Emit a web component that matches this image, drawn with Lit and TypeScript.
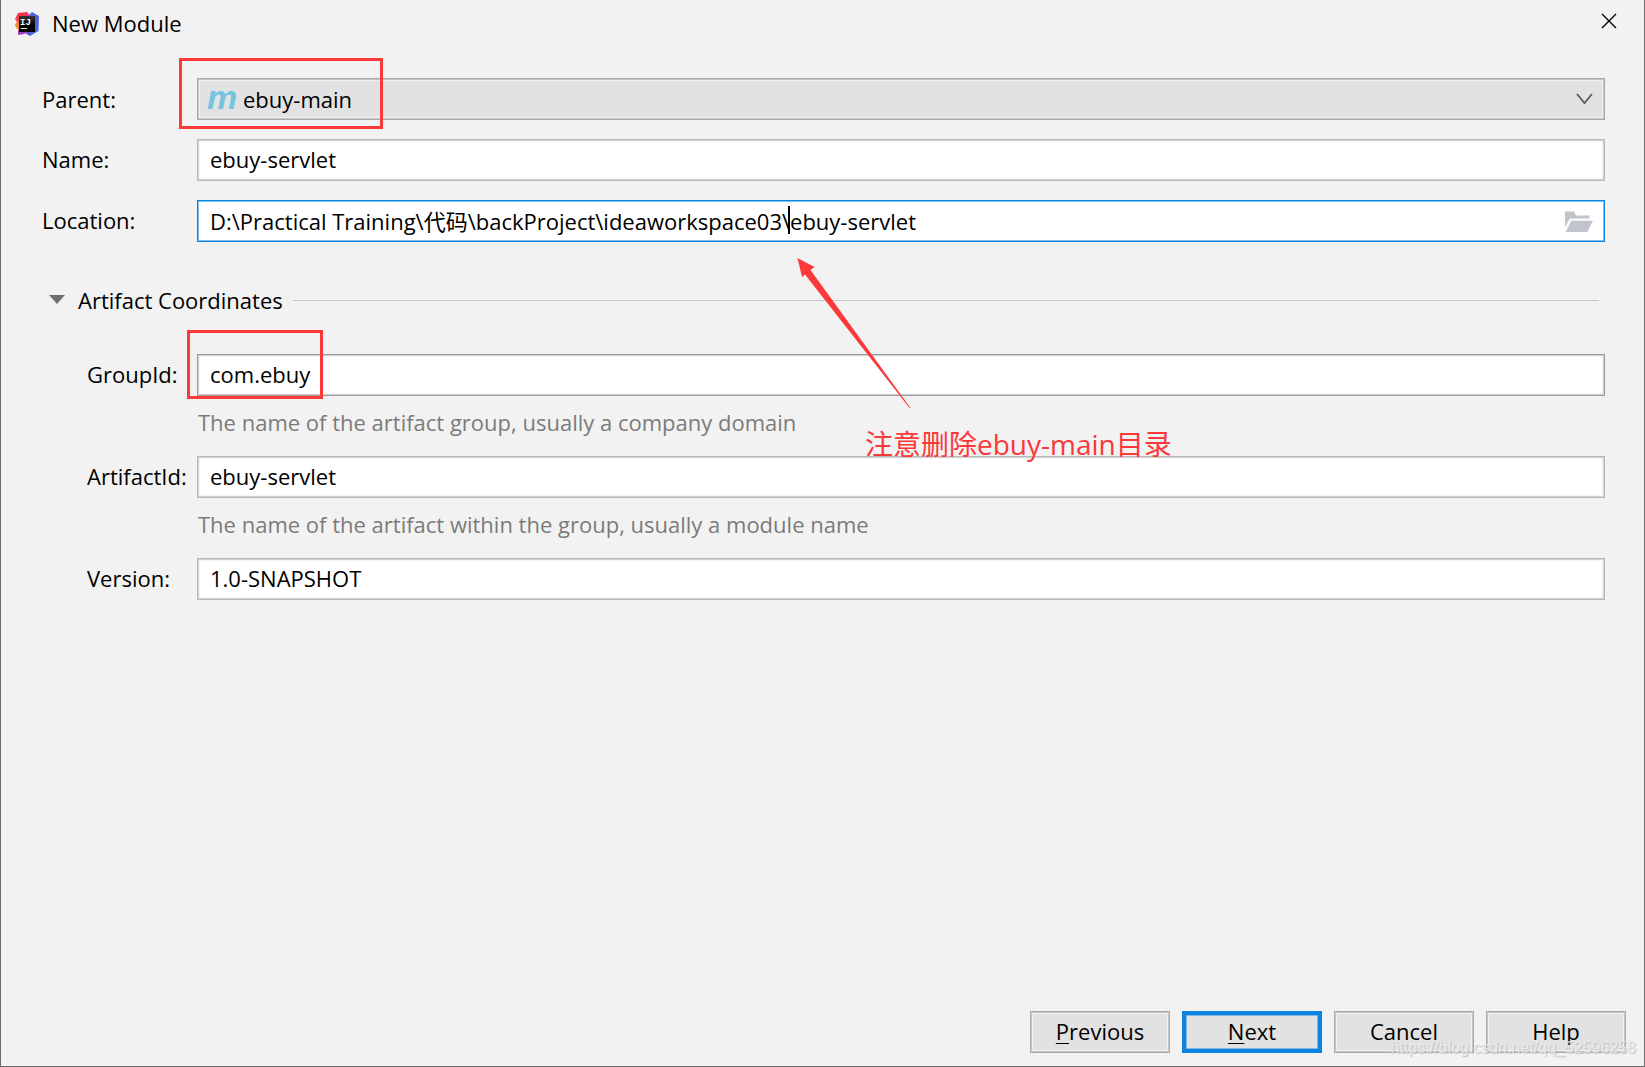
import { LitElement, html, css, svg } from "lit";
import { customElement, property, state } from "lit/decorators.js";

const folderIcon = svg`
  <svg viewBox="0 0 28 22" width="28" height="22" aria-hidden="true">
    <path d="M0 0.5H9L11 4.5H24.5V7.5H5L0 16.5Z" fill="#bfc5ca"></path>
    <path d="M6.3 9.8H28L22.3 21H0.5Z" fill="#bfc5ca"></path>
  </svg>`;

@customElement("form-row")
export class FormRow extends LitElement {
  @property() label = "";
  @property() value = "";
  @property() hint = "";
  @property({ type: Boolean, reflect: true }) active = false;
  @property({ type: Boolean, reflect: true }) strong = false;

  static styles = css`
    :host { display: grid; grid-template-columns: var(--label-width) minmax(0, 1fr); align-items: center; }
    .label { white-space: nowrap; line-height: 40px; padding-bottom: 2px; }
    .field { position: relative; height: 42px; }
    .input {
      display: block; box-sizing: border-box; width: 100%; height: 42px; margin: 0; padding: 0 12px 2px;
      border: 1px solid #b8b8b8; border-radius: 0; outline: none; color: #000; background: #fff;
      box-shadow: inset 0 0 0 1px #d2d2d2, inset 0 0 0 2px #f6f6f6; font: inherit;
    }
    :host([strong]) .input { border-color: #9a9a9a; }
    :host([active]) .input { border-color: #0a84e0; box-shadow: inset 0 0 0 1px #7fbef0; padding-right: 52px; }
    .browse {
      position: absolute; right: 8px; top: 7px; display: grid; place-items: center;
      width: 36px; height: 30px; padding: 0; border: 0; background: none;
    }
    .caret { position: absolute; left: 591px; top: 6px; width: 2px; height: 28px; background: #000; }
    .hint { grid-column: 2; height: 60px; line-height: 52px; padding-left: 1px; color: #7b7b7b; white-space: nowrap; }
  `;

  render() {
    return html`
      <label class="label" for="box">${this.label}</label>
      <div class="field">
        <input class="input" id="box" type="text" spellcheck="false" .value=${this.value} />
        ${this.active
          ? html`<span class="caret"></span>
              <button class="browse" type="button" aria-label="Browse">${folderIcon}</button>`
          : null}
      </div>
      ${this.hint ? html`<div class="hint">${this.hint}</div>` : null}
    `;
  }
}

@customElement("app-root")
export class AppRoot extends LitElement {
  @state() private open = true;

  static styles = css`
    :host {
      position: relative; display: flex; flex-direction: column; box-sizing: border-box; min-height: 100vh;
      border: 1px solid #6c6c6c; border-top: 0; overflow: hidden; background: #f2f2f2; color: #000;
      font: 22px/30px "Open Sans", "Noto Sans CJK SC", sans-serif;
    }
    .titlebar { display: flex; align-items: center; height: 48px; padding: 0 23px 0 14px; }
    .title { flex: 1; margin: 0 0 2px 13px; font-size: 22px; font-weight: 400; }
    .close { display: grid; place-items: center; width: 24px; height: 24px; margin-bottom: 6px; padding: 0; border: 0; background: none; }
    .form { flex: 1; padding: 30px 39px 0 41px; }
    .rows { display: grid; gap: 19px; --label-width: 155px; }
    .parent { display: grid; grid-template-columns: 155px minmax(0, 1fr); align-items: center; }
    .combo { position: relative; height: 42px; }
    .select {
      display: block; appearance: none; box-sizing: border-box; width: 100%; height: 42px; margin: 0; padding: 0 45px;
      border: 1px solid #a9a9a9; border-radius: 0; outline: none; background: #e2e2e2; color: #000; font: inherit;
      box-shadow: inset 0 0 0 1px #c6c6c6, inset 0 0 0 2px #f2f2f2;
    }
    .maven {
      position: absolute; left: 10px; top: 0; line-height: 38px; pointer-events: none;
      font-family: "Liberation Sans", sans-serif; font-size: 34px; font-weight: 700; font-style: italic; color: #74c4e0;
    }
    .chevron { position: absolute; right: 12px; top: 15px; pointer-events: none; }
    .section { display: flex; align-items: center; height: 30px; margin: 43px 6px 0 7px; }
    .toggle {
      display: flex; align-items: center; gap: 13px; margin: 0 10px 0 0; padding: 0; border: 0;
      background: none; color: inherit; font: inherit; white-space: nowrap;
    }
    .rule { flex: 1; height: 1px; background: #c8c8c8; }
    .details { margin: 39px 0 0 45px; --label-width: 110px; }
    .actions { display: flex; justify-content: flex-end; flex-wrap: wrap; gap: 12px; padding: 0 18px 13px; }
    .button {
      width: 140px; height: 42px; padding: 0 0 2px; border: 1px solid #a9a9a9; border-radius: 0; background: #e2e2e2;
      box-shadow: inset 0 0 0 1px #c6c6c6, inset 0 0 0 2px #f2f2f2; color: #000; font: inherit;
    }
    .primary { border: 4px solid #0a84e0; box-shadow: inset 0 0 0 1px #7fb8e6; }
    .key { text-decoration: underline; text-decoration-thickness: 1px; text-underline-offset: 3px; }
    .mark { position: absolute; box-sizing: border-box; border: 3px solid #fc3838; pointer-events: none; }
    .mark-parent { left: 178px; top: 58px; width: 204px; height: 71px; }
    .mark-group { left: 186px; top: 330px; width: 136px; height: 69px; }
    .arrow { position: absolute; left: 796px; top: 258px; pointer-events: none; }
    .note { position: absolute; left: 864px; top: 424px; margin: 0; color: #fc3838; font-size: 28px; line-height: 40px; white-space: nowrap; pointer-events: none; }
    .watermark {
      position: absolute; right: 8px; bottom: 8px; color: #ececec; text-shadow: 1px 1px 1px #b4b4b4; opacity: 0.8;
      font: 16px/20px "Liberation Sans", sans-serif; pointer-events: none;
    }
  `;

  private toggle() {
    this.open = !this.open;
  }

  render() {
    return html`
      <header class="titlebar">
        <svg viewBox="0 0 24 24" width="24" height="24" aria-hidden="true">
          <defs>
            <linearGradient id="left" x1="0" y1="0" x2="0" y2="1">
              <stop offset="0" stop-color="#fe2857"></stop><stop offset="0.5" stop-color="#fc5a3c"></stop>
              <stop offset="0.6" stop-color="#f98a2c"></stop><stop offset="1" stop-color="#9b3fd0"></stop>
            </linearGradient>
            <linearGradient id="right" x1="0" y1="0" x2="1" y2="1">
              <stop offset="0" stop-color="#3b6cf0"></stop><stop offset="0.6" stop-color="#5a5bd8"></stop><stop offset="1" stop-color="#2f7bea"></stop>
            </linearGradient>
            <linearGradient id="tile" x1="0" y1="0" x2="0" y2="1">
              <stop offset="0" stop-color="#353535"></stop><stop offset="0.6" stop-color="#000"></stop>
            </linearGradient>
          </defs>
          <path d="M14 3L17 0L24 4L23.5 19L15 24L8 20Z" fill="url(#right)"></path>
          <path d="M3 1L12 0L15 4L6 20L8 20L3 23L3 16L0 13L2 10L0 7Z" fill="url(#left)"></path>
          <path d="M3 23L4 18L14 19L9 22Z" fill="#a43bc4"></path>
          <path d="M0 13L3 10L5 16L2 17Z" fill="#f98a2c"></path>
          <rect x="4" y="4" width="16" height="16" fill="url(#tile)"></rect>
          <text x="5" y="13" fill="#fff" font-family="Liberation Mono, monospace" font-weight="700" font-size="9">IJ</text>
          <rect x="6" y="16" width="6" height="1" fill="#ddd"></rect>
        </svg>
        <h1 class="title">New Module</h1>
        <button class="close" type="button" aria-label="Close">
          <svg viewBox="0 0 16 16" width="16" height="16" aria-hidden="true">
            <path d="M1 1L15 15M15 1L1 15" stroke="#000" stroke-width="1.4" fill="none"></path>
          </svg>
        </button>
      </header>

      <main class="form">
        <div class="rows">
          <div class="parent">
            <label for="parent">Parent:</label>
            <div class="combo">
              <select class="select" id="parent"><option>ebuy-main</option></select>
              <span class="maven" aria-hidden="true">m</span>
              <svg class="chevron" viewBox="0 0 17 12" width="17" height="12" aria-hidden="true">
                <path d="M1 1L8.500 10L16 1" fill="none" stroke="#5c5c5c" stroke-width="1.800"></path>
              </svg>
            </div>
          </div>
          <form-row label="Name:" value="ebuy-servlet"></form-row>
          <form-row active label="Location:" value="D:\\Practical Training\\代码\\backProject\\ideaworkspace03\\ebuy-servlet"></form-row>
        </div>

        <div class="section">
          <button class="toggle" type="button" aria-expanded=${this.open} @click=${this.toggle}>
            <svg viewBox="0 0 16 10" width="16" height="10" aria-hidden="true"><path d="M0 0H16L8 9Z" fill="#707070"></path></svg>
            Artifact Coordinates
          </button>
          <span class="rule"></span>
        </div>

        ${this.open
          ? html`<div class="details">
              <form-row strong label="GroupId:" value="com.ebuy" hint="The name of the artifact group, usually a company domain"></form-row>
              <form-row label="ArtifactId:" value="ebuy-servlet" hint="The name of the artifact within the group, usually a module name"></form-row>
              <form-row label="Version:" value="1.0-SNAPSHOT"></form-row>
            </div>`
          : null}
      </main>

      <footer class="actions">
        <button class="button" type="button"><span class="key">P</span>revious</button>
        <button class="button primary" type="button"><span class="key">N</span>ext</button>
        <button class="button" type="button">Cancel</button>
        <button class="button" type="button">Help</button>
      </footer>

      <div class="mark mark-parent"></div>
      <div class="mark mark-group"></div>
      <svg class="arrow" viewBox="0 0 114 151" width="114" height="151" aria-hidden="true">
        <path d="M0.500 0L17.500 9L13.500 12L113.500 150L112.500 150L8 16.500L5 19Z" fill="#fc3838"></path>
      </svg>
      <p class="note">注意删除ebuy-main目录</p>
      <span class="watermark">https://blog.csdn.net/qq_52596258</span>
    `;
  }
}
